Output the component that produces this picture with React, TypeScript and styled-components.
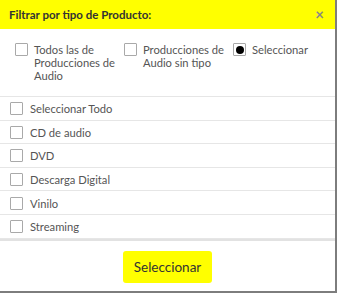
import React from "react";
import styled, { createGlobalStyle } from "styled-components";

const GlobalStyle = createGlobalStyle`
  html, body {
    margin: 0;
    padding: 0;
    background: #7d7d7d;
  }
  * {
    box-sizing: border-box;
  }
`;

const Modal = styled.div`
  width: 335px;
  height: 291px;
  background: #fff;
  display: flex;
  flex-direction: column;
  font-family: Lato, "Open Sans", sans-serif;
  color: #555;
  overflow: hidden;
`;

const Header = styled.div`
  height: 29px;
  flex-shrink: 0;
  background: #ffff00;
  display: flex;
  align-items: center;
  justify-content: space-between;
  padding: 0 9px 0 9px;
`;

const Title = styled.h4`
  margin: 0;
  font-size: 11.5px;
  font-weight: 700;
  color: #333;
`;

const Close = styled.span`
  font-size: 15px;
  font-weight: 700;
  color: #888;
  line-height: 1;
  padding-right: 2px;
`;

const Options = styled.div`
  height: 68px;
  flex-shrink: 0;
  display: grid;
  grid-template-columns: 109px 109px 1fr;
  padding: 14px 0 0 15px;
  border-bottom: 1px solid #e6e6e6;
`;

const OptionItem = styled.label`
  display: flex;
  align-items: flex-start;
  gap: 6px;
  font-size: 11.2px;
  line-height: 13px;
`;

const Box = styled.span<{ $checked?: boolean }>`
  width: 13px;
  height: 13px;
  flex-shrink: 0;
  border: 1px solid #a9a9a9;
  border-radius: 1px;
  background: #fff;
  display: flex;
  align-items: center;
  justify-content: center;
  &::after {
    content: "";
    display: ${(p) => (p.$checked ? "block" : "none")};
    width: 8px;
    height: 8px;
    border-radius: 50%;
    background: #000;
  }
`;

const List = styled.div`
  display: flex;
  flex-direction: column;
`;

const Row = styled.label`
  height: 23.6px;
  display: flex;
  align-items: center;
  gap: 7px;
  padding-left: 10px;
  padding-top: 1px;
  font-size: 11.2px;
  border-bottom: 1px solid #e6e6e6;
`;

const Footer = styled.div`
  flex: 1;
  border-top: 2px solid #e2e2e2;
  display: flex;
  justify-content: center;
  padding-top: 10px;
`;

const Button = styled.button`
  width: 89px;
  height: 32px;
  background: #ffff00;
  border: none;
  border-radius: 3px;
  font-family: Lato, "Open Sans", sans-serif;
  font-size: 13.5px;
  color: #333;
  padding: 0;
`;

const productTypes = [
  "Seleccionar Todo",
  "CD de audio",
  "DVD",
  "Descarga Digital",
  "Vinilo",
  "Streaming",
];

export default function App() {
  return (
    <>
      <GlobalStyle />
      <Modal>
        <Header>
          <Title>Filtrar por tipo de Producto:</Title>
          <Close>×</Close>
        </Header>
        <Options>
          <OptionItem>
            <Box />
            <span>
              Todos las de
              <br />
              Producciones de
              <br />
              Audio
            </span>
          </OptionItem>
          <OptionItem>
            <Box />
            <span>
              Producciones de
              <br />
              Audio sin tipo
            </span>
          </OptionItem>
          <OptionItem>
            <Box $checked />
            <span>Seleccionar</span>
          </OptionItem>
        </Options>
        <List>
          {productTypes.map((t) => (
            <Row key={t}>
              <Box />
              <span>{t}</span>
            </Row>
          ))}
        </List>
        <Footer>
          <Button>Seleccionar</Button>
        </Footer>
      </Modal>
    </>
  );
}
